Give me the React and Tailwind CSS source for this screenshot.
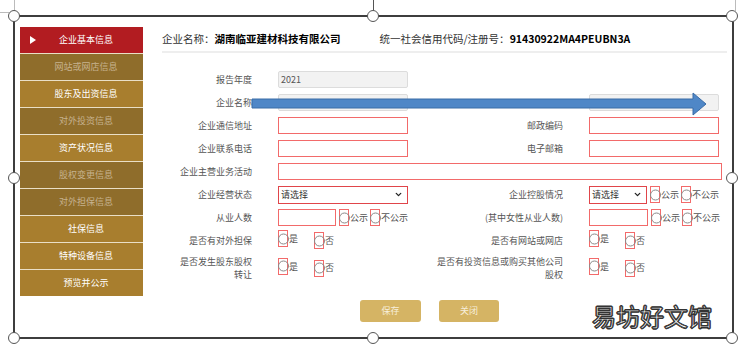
import { ChevronDown } from "lucide-react"

const navItems = [
  { name: "企业基本信息", type: "active" },
  { name: "网站或网店信息", type: "off" },
  { name: "股东及出资信息", type: "on" },
  { name: "对外投资信息", type: "off" },
  { name: "资产状况信息", type: "on" },
  { name: "股权变更信息", type: "off" },
  { name: "对外担保信息", type: "off" },
  { name: "社保信息", type: "on" },
  { name: "特种设备信息", type: "on" },
  { name: "预览并公示", type: "on" },
]

const navColors = {
  active: "bg-[#b21c21] text-white",
  on: "bg-[#a87e2e] text-white",
  off: "bg-[#8f6d2b] text-[#c6b28f]",
}

// selection handle on the frame line
const Handle = ({ className }) => (
  <span
    className={`absolute w-[12px] h-[12px] rounded-full border border-[#555] bg-white -translate-x-1/2 -translate-y-1/2 ${className}`}
  />
)

const Radio = ({ label }) => (
  <span className="inline-flex items-center">
    <span className="relative w-[10px] h-[17px] border border-[#f26a6a]">
      <span className="absolute left-[-1px] top-1/2 -translate-y-1/2 w-[11px] h-[11px] rounded-full border border-[#8a8a8a]" />
    </span>
    <span className="ml-[1px]">{label}</span>
  </span>
)

const Publish = () => (
  <div className="flex items-center gap-[2px] ml-[3px]">
    <Radio label="公示" />
    <Radio label="不公示" />
  </div>
)

const YesNo = () => (
  <div className="flex items-center">
    <div className="w-[36px]">
      <Radio label="是" />
    </div>
    <Radio label="否" />
  </div>
)

const TextInput = ({ w = "w-[130px]" }) => <div className={`${w} h-[17px] border border-[#f26a6a] bg-white`} />

const GrayInput = ({ value }) => (
  <div className="w-[130px] h-[17px] border border-[#dcdcdc] bg-[#f2f2f2] rounded-[2px] pl-[2px] flex items-center text-[#555]">
    {value}
  </div>
)

const Select = ({ w }) => (
  <div className={`${w} h-[18px] border border-[#e0454a] bg-white flex items-center justify-between pl-[2px] pr-[4px] text-[#333]`}>
    <span>请选择</span>
    <ChevronDown size={9} strokeWidth={3.5} className="text-[#222]" />
  </div>
)

const Row = ({ label, left, rightLabel, right, tall }) => (
  <div className={`flex items-center ${tall ? "h-[26px]" : "h-[17px]"}`}>
    <div className="w-[80px] text-right leading-[13px]">{label}</div>
    <div className="ml-[26px] w-[130px] flex items-center">{left}</div>
    {rightLabel !== undefined && (
      <>
        <div className="ml-[22px] w-[133px] text-right leading-[13px]">{rightLabel}</div>
        <div className="ml-[26px] flex items-center">{right}</div>
      </>
    )}
  </div>
)

export default function App() {
  return (
    <div
      className="relative w-[740px] h-[349px] bg-white overflow-hidden text-[9px] text-[#555]"
      style={{ fontFamily: '"Noto Sans CJK SC", "Noto Sans", sans-serif' }}
    >
      {/* crop marks + rotate line */}
      <span className="absolute left-[14px] top-0 w-px h-[11px] bg-[#bbb]" />
      <span className="absolute left-0 top-[12px] w-[9px] h-px bg-[#bbb]" />
      <span className="absolute left-[735px] top-0 w-px h-[11px] bg-[#bbb]" />
      <span className="absolute left-[373px] top-0 w-px h-[11px] bg-[#555]" />

      <div className="pt-[15px] pl-[13px]">
        <div className="relative w-[721px] h-[324px] border-2 border-[#3d3d3d] pl-[5px] pt-[10px] flex">
          {/* Sidebar */}
          <nav className="w-[123px] flex flex-col gap-px bg-[#eadfc6] self-start">
            {navItems.map((item) => (
              <div
                key={item.name}
                className={`relative h-[26px] flex items-center justify-center pl-[9px] ${navColors[item.type]}`}
              >
                {item.type === "active" && (
                  <span className="absolute left-[10px] top-1/2 -translate-y-1/2 w-0 h-0 border-y-[4px] border-y-transparent border-l-[6px] border-l-white" />
                )}
                {item.name}
              </div>
            ))}
          </nav>

          {/* Main */}
          <div className="ml-[19px] w-[565px]">
            <div className="h-[26px] flex items-center text-[10.5px] text-[#333] border-b-2 border-[#eeeeee]">
              <span>企业名称：</span>
              <span className="font-bold text-black">湖南临亚建材科技有限公司</span>
              <span className="ml-[39px]">统一社会信用代码/注册号：</span>
              <span className="font-bold text-black">91430922MA4PEUBN3A</span>
            </div>

            <div className="mt-[18px] pl-[10px] flex flex-col gap-[6px]">
              <Row label="报告年度" left={<GrayInput value="2021" />} />
              <Row label="企业名称" left={<GrayInput />} rightLabel="" right={<GrayInput />} />
              <Row label="企业通信地址" left={<TextInput />} rightLabel="邮政编码" right={<TextInput />} />
              <Row label="企业联系电话" left={<TextInput />} rightLabel="电子邮箱" right={<TextInput />} />
              <div className="flex items-center h-[17px]">
                <div className="w-[80px] text-right">企业主营业务活动</div>
                <div className="ml-[26px]">
                  <TextInput w="w-[444px]" />
                </div>
              </div>
              <Row
                label="企业经营状态"
                left={<Select w="w-[130px]" />}
                rightLabel="企业控股情况"
                right={
                  <>
                    <Select w="w-[58px]" />
                    <Publish />
                  </>
                }
              />
              <Row
                label="从业人数"
                left={
                  <>
                    <TextInput w="w-[58px] shrink-0" />
                    <Publish />
                  </>
                }
                rightLabel="(其中女性从业人数)"
                right={
                  <>
                    <TextInput w="w-[59px]" />
                    <Publish />
                  </>
                }
              />
              <Row label="是否有对外担保" left={<YesNo />} rightLabel="是否有网站或网店" right={<YesNo />} />
              <Row
                tall
                label="是否发生股东股权转让"
                left={<YesNo />}
                rightLabel="是否有投资信息或购买其他公司股权"
                right={<YesNo />}
              />
            </div>

            <div className="mt-[19px] flex pl-[198px] text-[#f7efdc]">
              <button className="w-[61px] h-[22px] rounded-[3px] bg-[#d5b464]">保存</button>
              <button className="ml-[18px] w-[60px] h-[22px] rounded-[3px] bg-[#d5b464]">关闭</button>
            </div>
          </div>

          <Handle className="left-[-1px] top-[-1px]" />
          <Handle className="left-[358px] top-[-1px]" />
          <Handle className="left-[717px] top-[-1px]" />
          <Handle className="left-[-1px] top-[161px]" />
          <Handle className="left-[717px] top-[161px]" />
          <Handle className="left-[-1px] top-[321px]" />
          <Handle className="left-[358px] top-[321px]" />
          <Handle className="left-[717px] top-[321px]" />
        </div>
      </div>

      {/* blue arrow drawn over the form */}
      <svg className="absolute left-[251px] top-[92px]" width="458" height="24" viewBox="0 0 458 24">
        <path d="M1 7 H442 V1 L455 12 L442 23 V16 H1 Z" fill="#4f87c7" stroke="#3a6ca6" strokeWidth="1" />
      </svg>

      {/* watermark */}
      <div className="absolute left-[592px] top-[301px] text-[24px] leading-[30px] text-white tracking-[0px] [-webkit-text-stroke:1px_#333] [text-shadow:1px_0_0_#333,-1px_0_0_#333,0_1px_0_#333,0_-1px_0_#333]">
        易坊好文馆
      </div>
    </div>
  )
}
